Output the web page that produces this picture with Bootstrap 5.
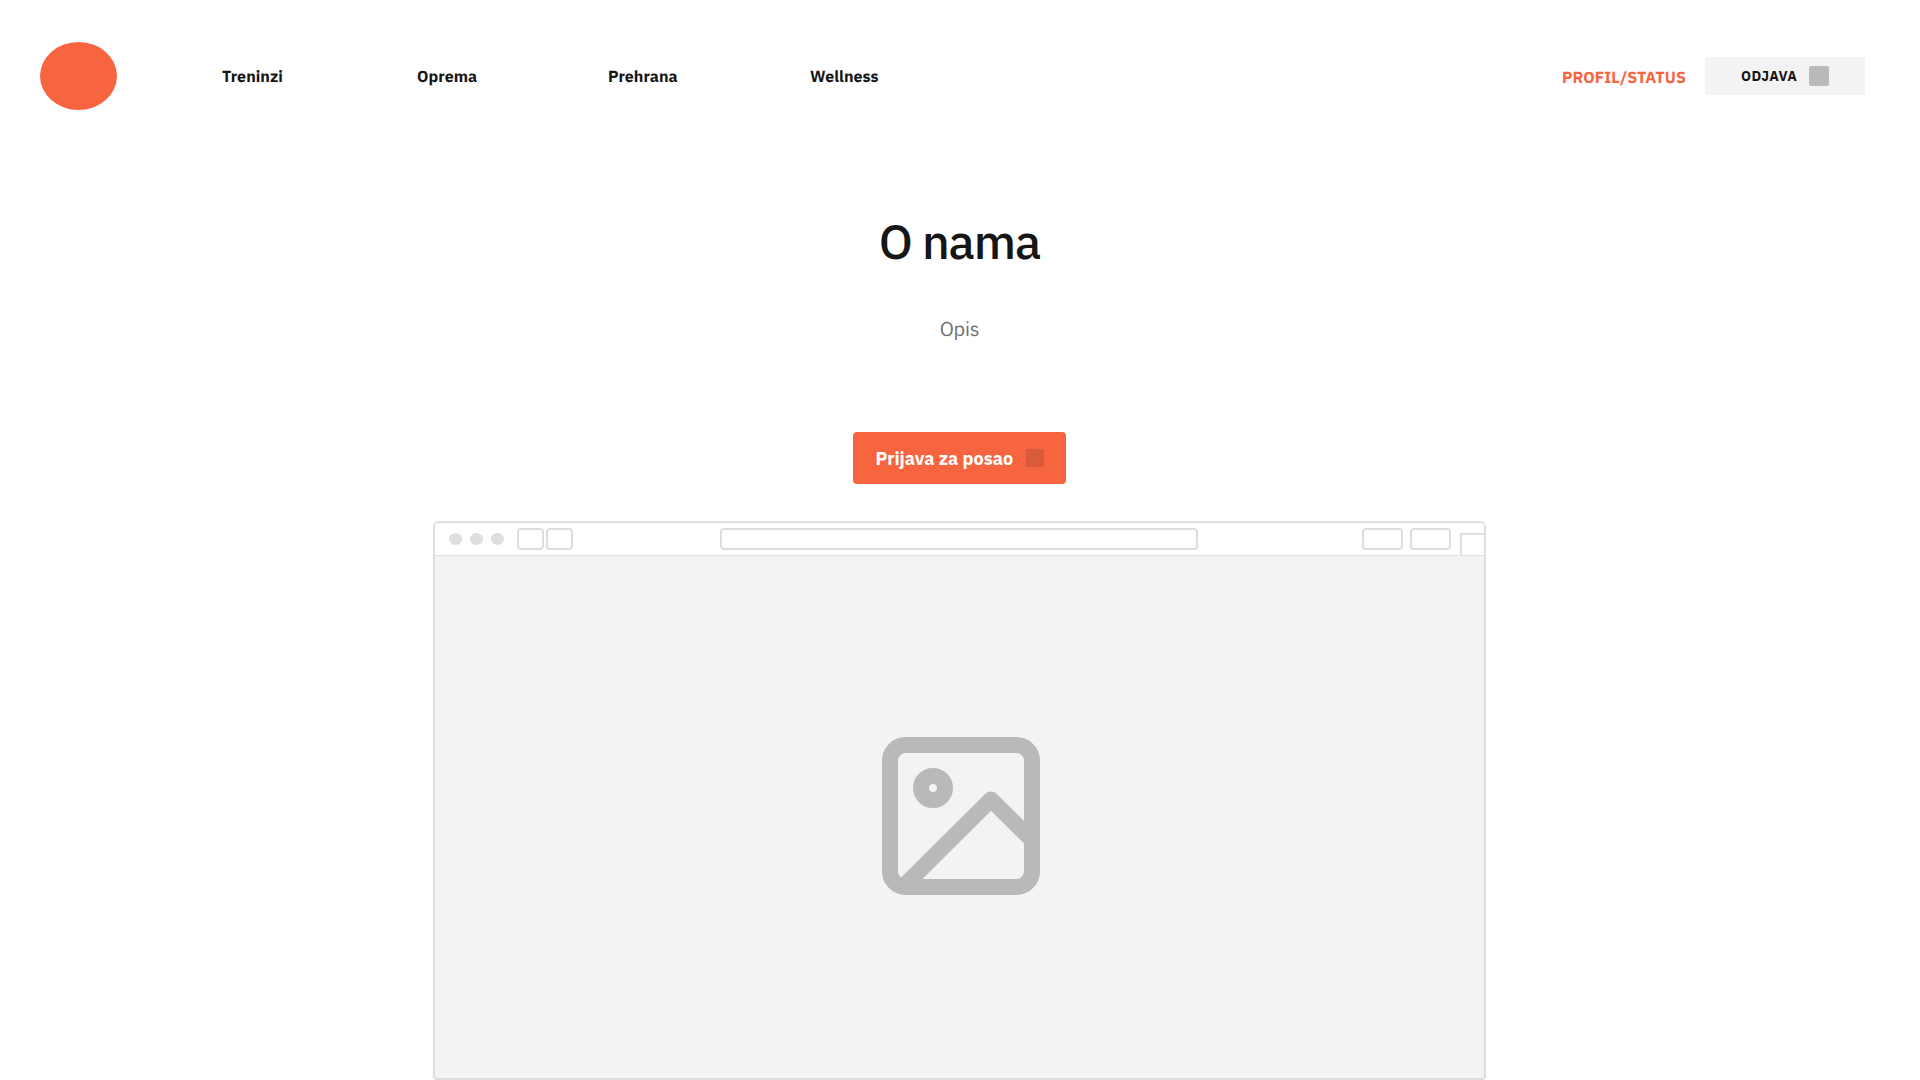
<!DOCTYPE html>
<html lang="hr">
<head>
<meta charset="utf-8">
<meta name="viewport" content="width=device-width, initial-scale=1">
<title>O nama</title>
<link href="https://cdn.jsdelivr.net/npm/bootstrap@5.3.0/dist/css/bootstrap.min.css" rel="stylesheet">
<style>
:root { --brand: #f76540; --ink: #161616; --line: #dedede; --fill: #f3f3f3; --muted: #b9b9b9; }
body { font-family: "IBM Plex Sans", "Noto Sans", sans-serif; color: var(--ink); background: #fff; overflow: hidden; text-rendering: geometricPrecision; }
.topbar { padding: 42px 55px 0 40px; height: 110px; }
.logo { width: 77px; height: 68px; border-radius: 50%; background: var(--brand); margin-right: 105px; }
.topbar .nav-link { padding: 2px 0 0; font-size: 16px; font-weight: 700; line-height: 24px; color: var(--ink); white-space: nowrap; letter-spacing: .05px; }
.w-tr { width: 195px; } .w-op { width: 191px; } .w-pr { width: 202px; } .w-we { width: 80px; }
.profile { font-size: 16px; font-weight: 700; line-height: 24px; color: var(--brand); width: 143px; margin-top: 3px; white-space: nowrap; letter-spacing: .1px; }
.btn-logout { width: 160px; height: 38px; padding: 0 36px; background: var(--fill); border: 0; border-radius: 3px; font-size: 14px; font-weight: 700; color: var(--ink); letter-spacing: .45px; }
.swatch { width: 20px; height: 20px; border-radius: 2px; background: var(--muted); }
.page-main { padding-right: 2px; }
.headline { font-size: 48px; font-weight: 500; line-height: 60px; margin-top: 102px; padding-left: 1px; letter-spacing: -1.1px; }
.intro { font-size: 20px; font-weight: 400; line-height: 30px; color: #6f6f6f; margin-top: 42px; padding-left: 1px; letter-spacing: -.2px; }
.btn-apply { width: 213px; height: 52px; margin-top: 88px; padding: 0 22px 0 23px; border: 0; border-radius: 4px; background: var(--brand); color: #fff; font-size: 18px; font-weight: 700; white-space: nowrap; }
.btn-apply .swatch { width: 18px; height: 18px; background: #da5b39; }
.browser { width: 1053px; height: 559px; margin-top: 37px; border: 2px solid var(--line); border-radius: 6px 6px 4px 4px; background: var(--fill); overflow: hidden; }
.chrome { height: 33px; border-bottom: 1.5px solid var(--line); background: #fff; padding-left: 14px; }
.dot { width: 13px; height: 11.5px; border-radius: 50%; background: var(--line); margin-right: 8px; }
.key { height: 22.5px; border: 2px solid var(--line); border-radius: 4px; }
.k-sm { width: 27px; } .k-md { width: 41px; } .k-url { width: 478px; }
.tab-corner { width: 24px; height: 22px; border: solid var(--line); border-width: 2px 0 0 2px; }
</style>
<script src="https://cdn.jsdelivr.net/npm/bootstrap@5.3.0/dist/js/bootstrap.bundle.min.js"></script>
</head>
<body>
<header class="topbar d-flex align-items-center">
  <div class="logo flex-shrink-0"></div>
  <nav class="nav flex-nowrap">
    <a class="nav-link w-tr" href="#">Treninzi</a>
    <a class="nav-link w-op" href="#">Oprema</a>
    <a class="nav-link w-pr" href="#">Prehrana</a>
    <a class="nav-link w-we" href="#">Wellness</a>
  </nav>
  <a class="profile ms-auto text-decoration-none" href="#">PROFIL/STATUS</a>
  <button class="btn btn-logout d-flex align-items-center justify-content-between"><span class="out-label">ODJAVA</span><span class="swatch"></span></button>
</header>
<main class="page-main d-flex flex-column align-items-center">
  <h1 class="headline mb-0">O nama</h1>
  <p class="intro mb-0">Opis</p>
  <button class="btn btn-apply d-flex align-items-center justify-content-between"><span class="apply-label">Prijava za posao</span><span class="swatch"></span></button>
  <section class="browser d-flex flex-column">
    <div class="chrome d-flex align-items-center flex-shrink-0">
      <span class="dot"></span><span class="dot"></span><span class="dot"></span>
      <span class="key k-sm" style="margin-left:5px"></span>
      <span class="key k-sm" style="margin-left:2px"></span>
      <span class="key k-url" style="margin-left:147px"></span>
      <span class="key k-md ms-auto"></span>
      <span class="key k-md" style="margin-left:7px"></span>
      <span class="tab-corner align-self-end" style="margin-left:9px"></span>
    </div>
    <div class="flex-grow-1 d-flex justify-content-center" style="padding-top:181px">
      <svg class="ms-1" width="158" height="158" viewBox="0 0 158 158" fill="none" stroke="#b9b9b9">
        <rect x="8" y="8" width="142" height="142" rx="15.5" stroke-width="16"/>
        <circle cx="51" cy="51" r="12" stroke-width="16"/>
        <path d="M24 147L109 62.500L148 101" stroke-width="16" stroke-linejoin="round"/>
      </svg>
    </div>
  </section>
</main>
</body>
</html>
